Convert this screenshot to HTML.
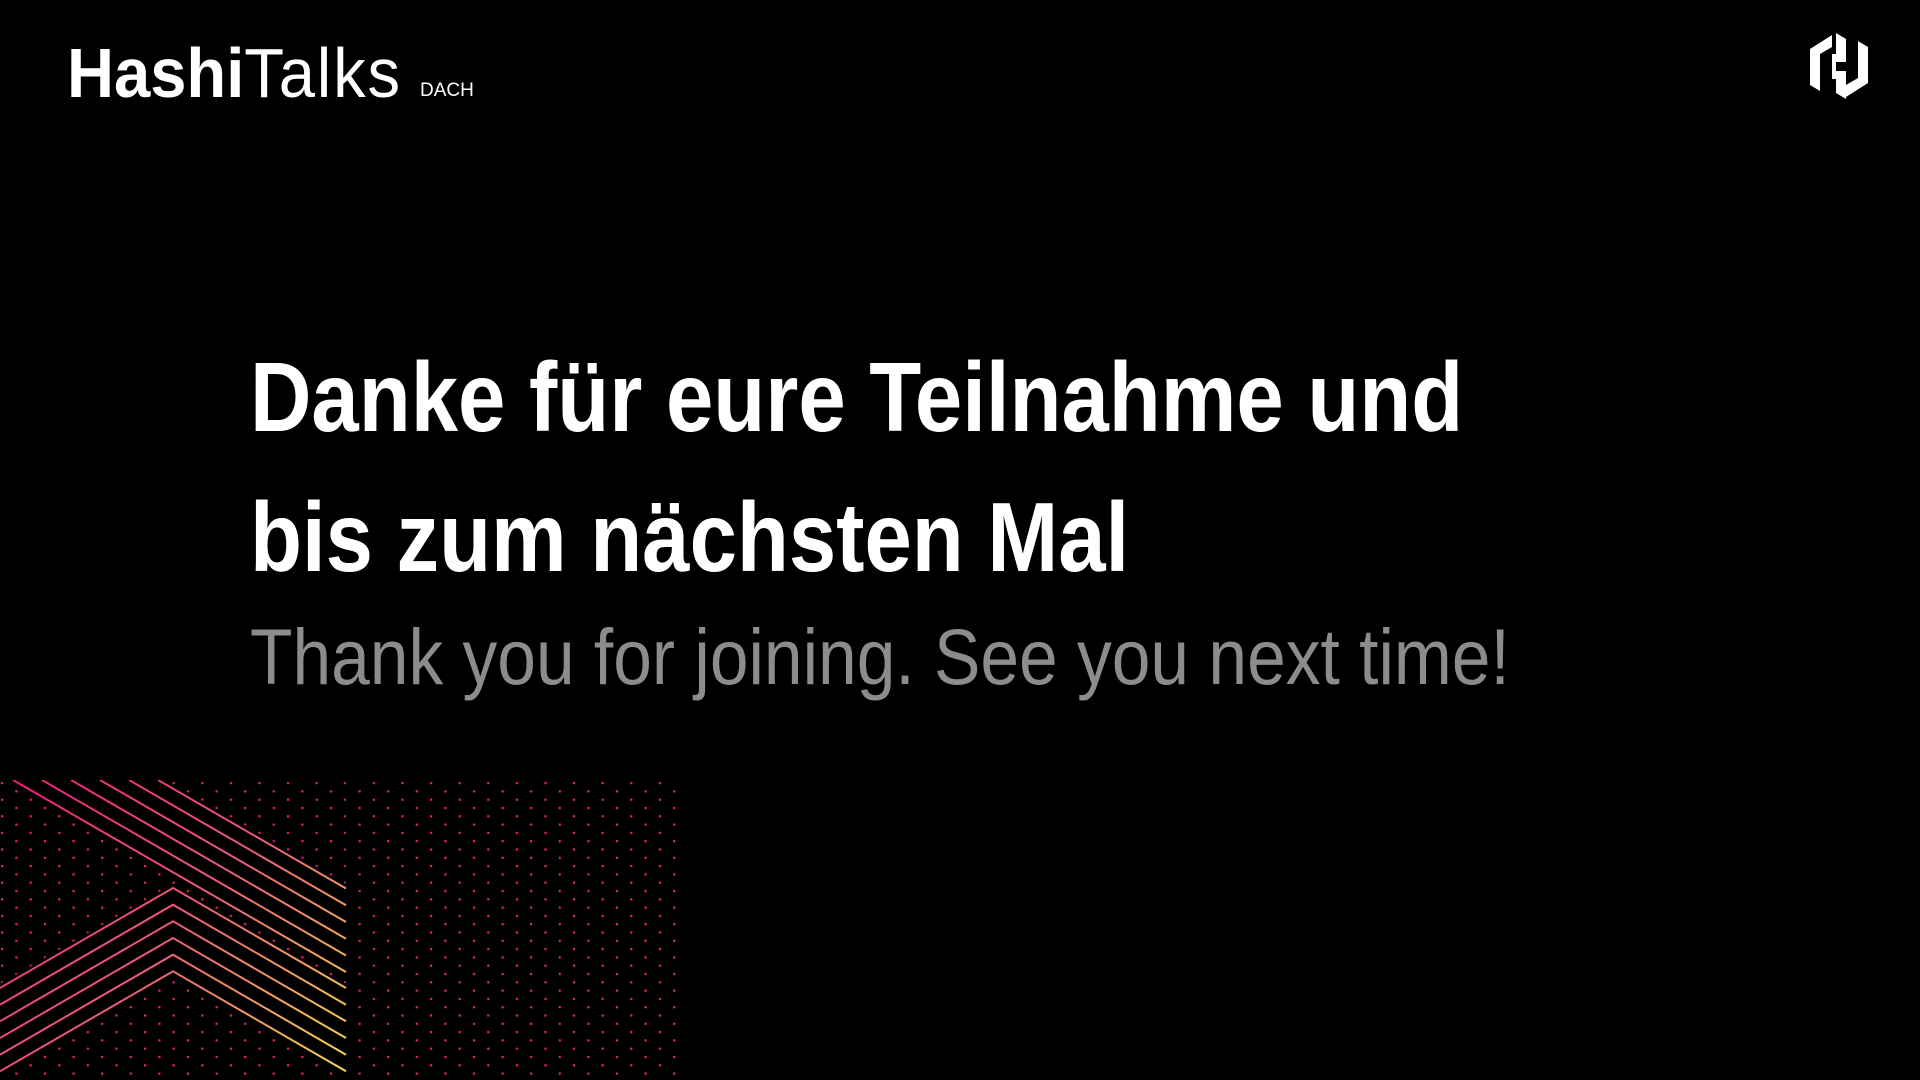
<!DOCTYPE html>
<html><head><meta charset="utf-8"><style>
html,body{margin:0;padding:0;background:#000;}
body{width:1920px;height:1080px;position:relative;overflow:hidden;font-family:"Liberation Sans",sans-serif;color:#fff;}
.t{position:absolute;white-space:nowrap;transform-origin:0 0;line-height:1;}
</style></head><body>
<div class="t" style="left:67px;top:38px;font-size:70px;transform:scaleX(0.93);"><b>Hashi</b><span style="font-weight:normal;letter-spacing:2px">Talks</span></div>
<div class="t" style="left:420px;top:81px;font-size:19px;">DACH</div>
<svg style="position:absolute;left:1806px;top:33px" width="66" height="66" viewBox="0 0 66 66">
<g fill="#fff">
<polygon points="26,2 26,14 14,21 14,58 4,52 4,16"/>
<polygon points="30,0 40,6 40,29 30,29 30,38 40,38 40,66 30,60 30,46 26,46 26,21 30,21"/>
<polygon points="40,64 40,52 52,45 52,8 62,14 62,50"/>
</g>
</svg>
<div class="t" style="left:250px;top:348px;font-size:98px;font-weight:bold;transform:scaleX(0.868);">Danke für eure Teilnahme und</div>
<div class="t" style="left:250px;top:488px;font-size:98px;font-weight:bold;transform:scaleX(0.868);">bis zum nächsten Mal</div>
<div class="t" style="left:250px;top:617px;font-size:79px;color:#8c8c8c;transform:scaleX(0.88);">Thank you for joining. See you next time!</div>
<svg style="position:absolute;left:0;top:780px" width="700" height="300" viewBox="0 780 700 300">
<defs>
<pattern id="d" x="0" y="780" width="28.6" height="16.6" patternUnits="userSpaceOnUse">
<rect x="1" y="2" width="2.2" height="2.2" fill="#e8226f"/>
<rect x="15.3" y="10.3" width="2.2" height="2.2" fill="#e8226f"/>
</pattern>
<linearGradient id="g" gradientUnits="userSpaceOnUse" x1="0" y1="780" x2="346" y2="1080">
<stop offset="0" stop-color="#ee1a7c"/><stop offset="0.5" stop-color="#ec5a78"/><stop offset="1" stop-color="#f4e04a"/>
</linearGradient>
</defs>
<rect x="0" y="780" width="685" height="300" fill="url(#d)"/>
<rect x="346" y="780" width="10" height="300" fill="#000"/>
<polygon points="8,780 166,780 346,884 346,978" fill="#000"/>
<polygon points="0,984 173,884 346,984 346,1075 173,975 0,1075" fill="#000"/>
<g stroke="url(#g)" stroke-width="2" fill="none">
<line x1="13" y1="780" x2="346" y2="972"/>
<line x1="42" y1="780" x2="346" y2="955.5"/>
<line x1="71" y1="780" x2="346" y2="938.8"/>
<line x1="100" y1="780" x2="346" y2="922"/>
<line x1="129" y1="780" x2="346" y2="905.3"/>
<line x1="158" y1="780" x2="346" y2="888.5"/>
<polyline points="0,988 173,888 346,988"/>
<polyline points="0,1004.7 173,904.7 346,1004.7"/>
<polyline points="0,1021.3 173,921.3 346,1021.3"/>
<polyline points="0,1038 173,938 346,1038"/>
<polyline points="0,1054.7 173,954.7 346,1054.7"/>
<polyline points="0,1071.3 173,971.3 346,1071.3"/>
</g>
</svg>
</body></html>
